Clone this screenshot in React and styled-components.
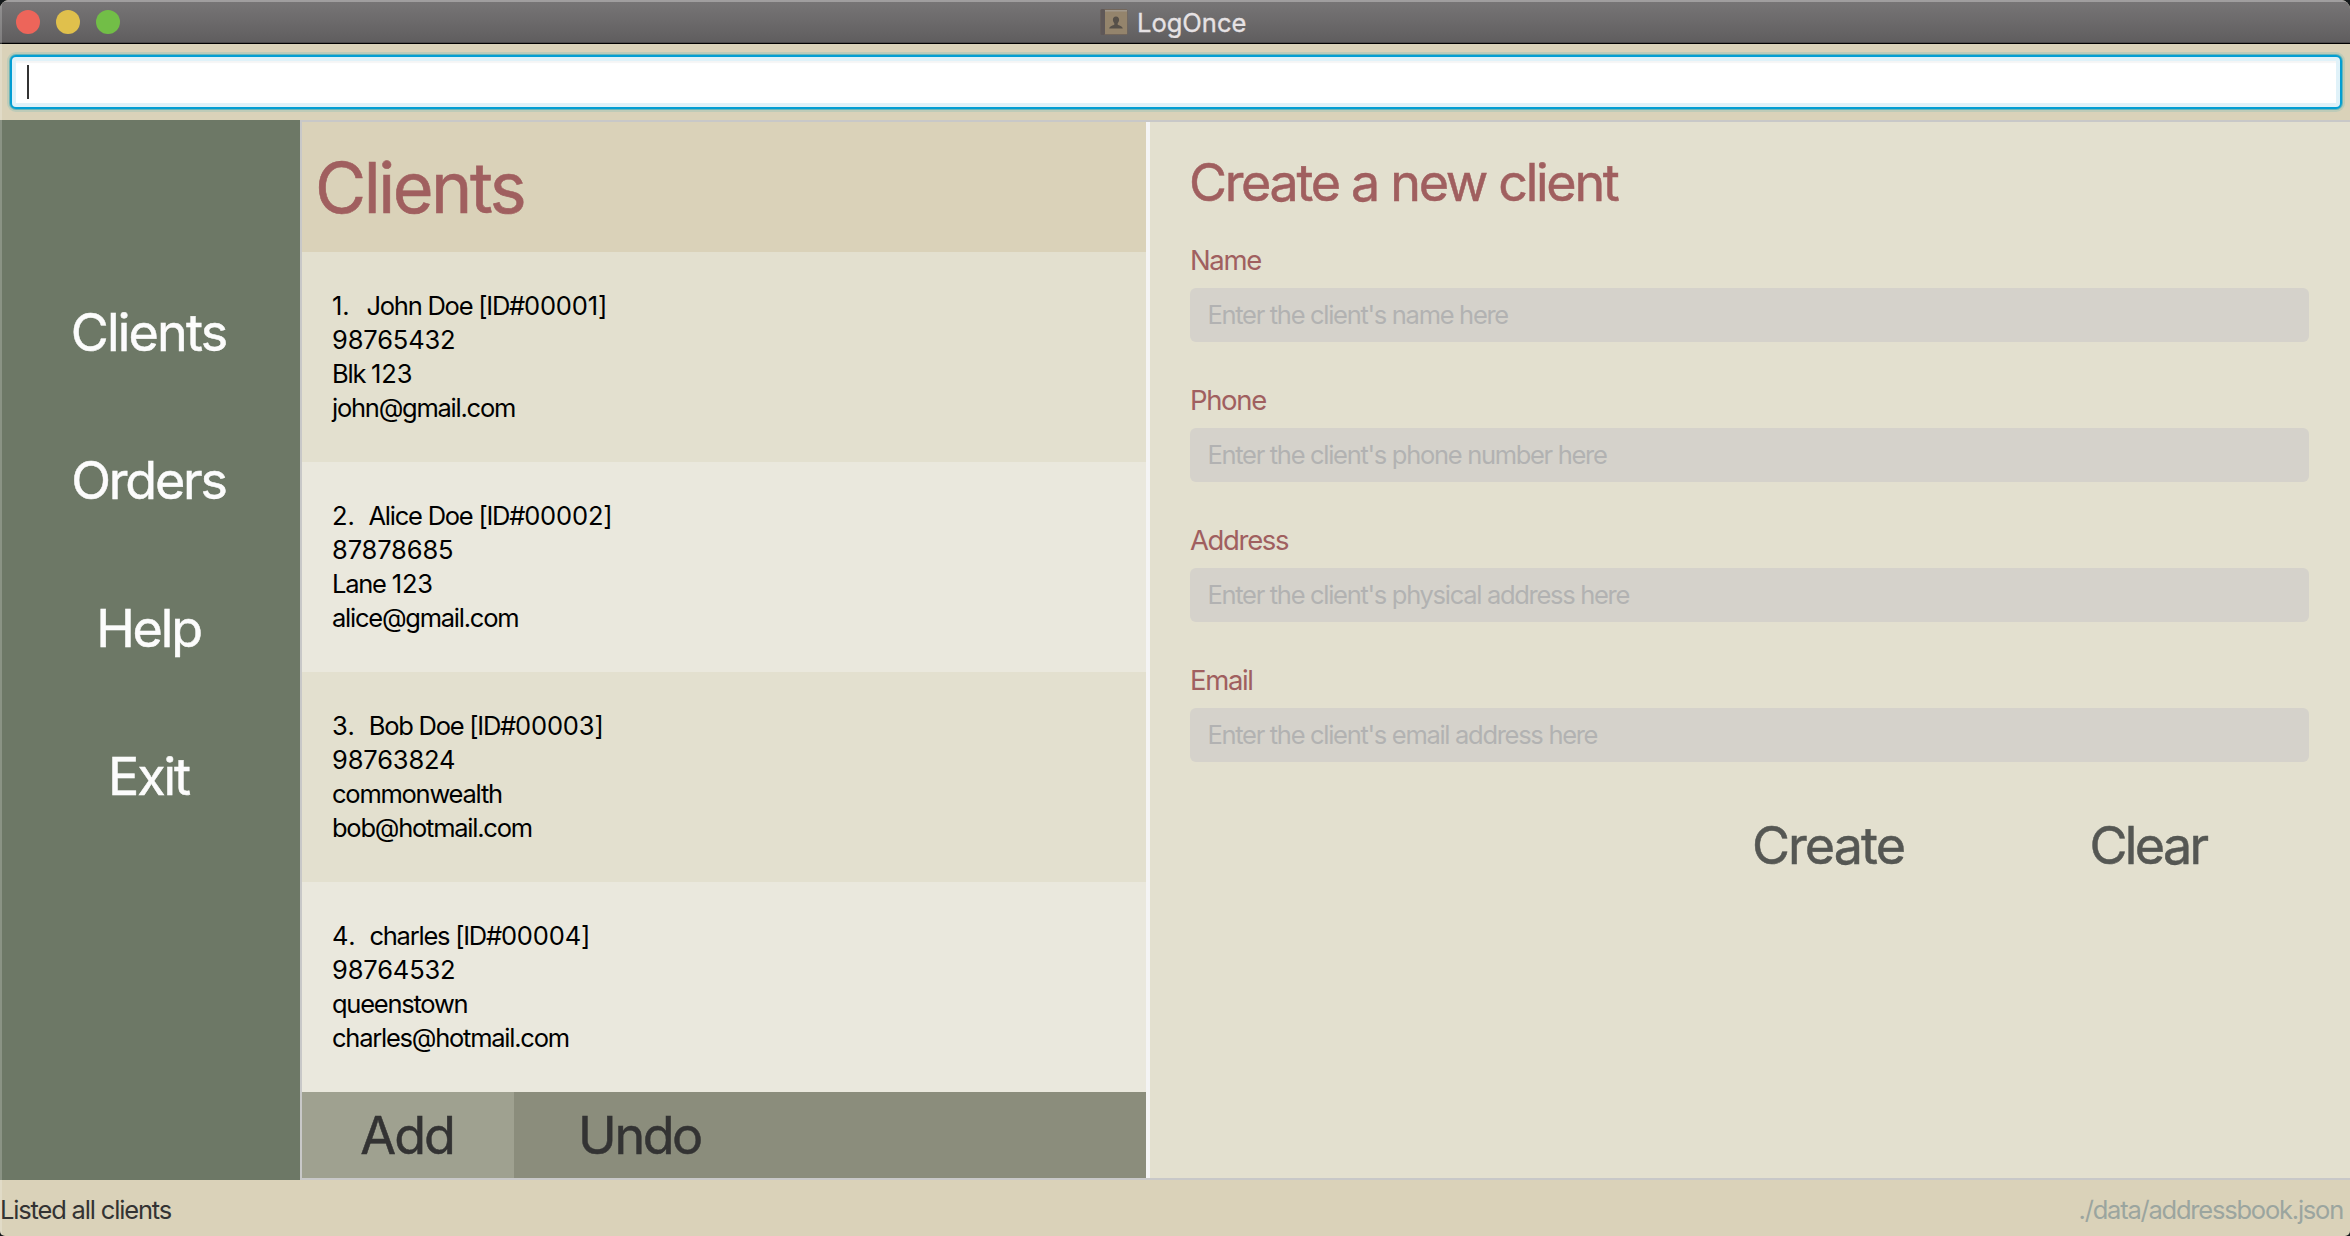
import React from 'react';
import styled, { createGlobalStyle } from 'styled-components';

const colors = {
  sand: '#dad2b9',
  moss: '#6d7866',
  cream: '#e3e0cf',
  creamLight: '#eae8dd',
  rose: '#a05f5f',
  line: '#c8c8c8',
};

const GlobalStyle = createGlobalStyle`
  * { box-sizing: border-box; }
  body { margin: 0; background: #14181a; font-family: Inter, "Liberation Sans", sans-serif; }
  button, input { font-family: inherit; border: 0; padding: 0; margin: 0; background: none; outline: none; }
`;

const Window = styled.div`
  position: relative;
  display: flex;
  flex-direction: column;
  width: 2350px;
  height: 1236px;
  overflow: hidden;
  background: ${colors.sand};
  border-radius: 9px 9px 5px 5px;
`;

const EdgeHighlight = styled.div`
  position: absolute;
  left: 0;
  top: 0;
  bottom: 0;
  width: 2px;
  background: rgba(255, 255, 255, 0.2);
  pointer-events: none;
`;

const TitleBar = styled.header`
  display: flex;
  align-items: flex-start;
  height: 44px;
  flex: none;
  padding: 8px 16px 0;
  background: linear-gradient(#777576, #5f5d5e);
  border-top: 2px solid #a09e9f;
  border-bottom: 1px solid #000;
  box-shadow: inset 0 -1px 0 #4b494a;
`;

const TrafficLights = styled.div`
  display: flex;
  gap: 16px;
  width: 1084px;
`;

const Light = styled.span`
  width: 24px;
  height: 24px;
  border-radius: 50%;
  background: ${(p) => p.$color};
`;

const TitleText = styled.span`
  margin: -3px 0 0 9px;
  font-size: 25.5px;
  line-height: 31px;
  color: #e6e2e4;
  -webkit-text-stroke: 0.3px currentColor;
`;

const BookIcon = styled.svg`
  display: block;
  width: 28px;
  height: 27px;
  margin-top: -1px;
`;

const CommandBar = styled.div`
  flex: none;
  height: 76px;
  padding: 11px 8px 0 10px;
`;

const CommandBox = styled.div`
  display: flex;
  align-items: flex-start;
  height: 54px;
  padding: 8px 13px;
  background: #fff;
  border: 2px solid #039ed3;
  border-radius: 6px;
  box-shadow: 0 0 0 1px #6bb5b8, 0 0 0 3px #becbb8, inset 0 0 0 4px #e0f2f9,
    inset 0 6px 1px #f5f5f5;
`;

const Caret = styled.span`
  width: 2px;
  height: 34px;
  margin-left: 2px;
  background: #333;
`;

const Main = styled.main`
  display: flex;
  flex: none;
  height: 1060px;
`;

const Sidebar = styled.nav`
  display: flex;
  flex-direction: column;
  align-items: center;
  gap: 85px;
  width: 300px;
  padding: 181px 3px 0 0;
  background: ${colors.moss};
`;

const BigButton = styled.button`
  font-size: 52px;
  line-height: 63px;
  letter-spacing: ${(p) => p.$tracking || -2.1}px;
  color: ${(p) => p.$color || '#333'};
  -webkit-text-stroke: 0.5px currentColor;
`;

const Content = styled.div`
  display: flex;
  flex: 1;
  border: 2px solid ${colors.line};
  border-right: 0;
`;

const ListPane = styled.section`
  display: flex;
  flex-direction: column;
  width: 844px;
`;

const ListHeader = styled.h1`
  height: 130px;
  margin: 0;
  padding: 23px 13px 0;
  font-size: 70px;
  font-weight: 400;
  line-height: 85px;
  letter-spacing: -2.45px;
  color: ${colors.rose};
  background: ${colors.sand};
  -webkit-text-stroke: 0.6px currentColor;
`;

const Card = styled.article`
  display: flex;
  flex-direction: column;
  gap: 3px;
  height: 210px;
  padding: 38px 30px 0;
  font-size: 25.5px;
  line-height: 31px;
  color: #000;
  background: ${colors.cream};
  &:nth-of-type(even) { background: ${colors.creamLight}; }
`;

const CardTitle = styled.div`
  display: grid;
  grid-template-columns: minmax(19.5px, max-content) max-content;
  gap: 15px;
`;

const Run = styled.span`
  letter-spacing: ${(p) => (p.$digits ? -0.15 : -1.24)}px;
  white-space: pre;
`;

const ActionBar = styled.div`
  display: flex;
  height: 86px;
  background: #8b8d7c;
`;

const ActionButton = styled(BigButton)`
  width: ${(p) => p.$width}px;
  background: ${(p) => (p.$active ? '#9fa190' : 'transparent')};
  padding: 1px 2px 0 0;
`;

const Divider = styled.div`
  width: 4px;
  background: #f4f4f4;
`;

const FormPane = styled.form`
  flex: 1;
  padding: 29px 41px 0 40px;
  background: ${colors.cream};
`;

const FormTitle = styled.h2`
  margin: 0 0 29px -1px;
  font-size: 52px;
  font-weight: 400;
  line-height: 63px;
  letter-spacing: -2.3px;
  color: ${colors.rose};
  -webkit-text-stroke: 0.5px currentColor;
`;

const Field = styled.label`
  display: flex;
  flex-direction: column;
  gap: 11px;
  height: 140px;
`;

const FieldLabel = styled.span`
  font-size: 27.5px;
  line-height: 34px;
  letter-spacing: -1.35px;
  color: ${colors.rose};
`;

const TextInput = styled.input`
  width: 100%;
  height: 54px;
  padding: 0 17.5px 1px;
  border-radius: 6px;
  background: #d5d2cb;
  font-size: 25.5px;
  letter-spacing: -1.3px;
  &::placeholder { color: #b2b2b2; opacity: 1; }
`;

const FormActions = styled.div`
  display: grid;
  grid-template-columns: 320px 320px;
  justify-content: end;
  padding: 11px 1px 0 0;
`;

const StatusBar = styled.footer`
  display: flex;
  justify-content: space-between;
  flex: 1;
  padding: 14px 7px 0 0;
  font-size: 25.5px;
  line-height: 31px;
  letter-spacing: -1.17px;
  color: #333;
`;

const FilePath = styled.span`
  letter-spacing: -1.22px;
  color: #9ba59f;
`;

const clients = [
  { name: 'John Doe', id: '00001', phone: '98765432', address: 'Blk 123', email: 'john@gmail.com' },
  { name: 'Alice Doe', id: '00002', phone: '87878685', address: 'Lane 123', email: 'alice@gmail.com' },
  { name: 'Bob Doe', id: '00003', phone: '98763824', address: 'commonwealth', email: 'bob@hotmail.com' },
  { name: 'charles', id: '00004', phone: '98764532', address: 'queenstown', email: 'charles@hotmail.com' },
];

const fields = [
  ['Name', "Enter the client's name here"],
  ['Phone', "Enter the client's phone number here"],
  ['Address', "Enter the client's physical address here"],
  ['Email', "Enter the client's email address here"],
];

// Digits are set looser than letters.
function Tracked({ children }) {
  return (
    <span>
      {children.split(/(\d+)/).filter(Boolean).map((part, i) => (
        <Run key={i} $digits={/\d/.test(part)}>{part}</Run>
      ))}
    </span>
  );
}

function AddressBook() {
  return (
    <BookIcon viewBox="0 0 28 27">
      <rect x="0.500" y="0" width="27" height="26" rx="1.5" fill="#74675b" />
      <rect x="0.500" y="0" width="4.500" height="26" rx="1.5" fill="#5f5858" />
      <rect x="5" y="1" width="22" height="24" fill="#94846c" />
      <rect x="5" y="1" width="22" height="1.5" fill="#a1988b" />
      <path d="M16 7.500c-2 0-3.100 1.400-3.100 3.300 0 1.600.7 2.700 1.400 3.400v1.500c-1.100.8-4.900 1.100-5.100 3.900h13.600c-.2-2.800-4-3.100-5.100-3.900v-1.500c.7-.7 1.400-1.800 1.400-3.400C19.100 8.900 18 7.500 16 7.500z" fill="#565049" />
    </BookIcon>
  );
}

export default function App() {
  return (
    <Window>
      <GlobalStyle />
      <TitleBar>
        <TrafficLights>
          <Light $color="#ed655a" />
          <Light $color="#e0c04c" />
          <Light $color="#72be47" />
        </TrafficLights>
        <AddressBook />
        <TitleText>LogOnce</TitleText>
      </TitleBar>
      <CommandBar>
        <CommandBox><Caret /></CommandBox>
      </CommandBar>
      <Main>
        <Sidebar>
          <BigButton $color="#fcfcfc" $tracking={-1.8}>Clients</BigButton>
          <BigButton $color="#fcfcfc" $tracking={-2.18}>Orders</BigButton>
          <BigButton $color="#fcfcfc" $tracking={-2.18}>Help</BigButton>
          <BigButton $color="#fcfcfc">Exit</BigButton>
        </Sidebar>
        <Content>
          <ListPane>
            <ListHeader>Clients</ListHeader>
            {clients.map((c, i) => (
              <Card key={c.id}>
                <CardTitle>
                  <Tracked>{`${i + 1}.`}</Tracked>
                  <Tracked>{`${c.name} [ID#${c.id}]`}</Tracked>
                </CardTitle>
                <Tracked>{c.phone}</Tracked>
                <Tracked>{c.address}</Tracked>
                <Tracked>{c.email}</Tracked>
              </Card>
            ))}
            <ActionBar>
              <ActionButton $width={212} $active>Add</ActionButton>
              <ActionButton $width={253} $tracking={-2.42}>Undo</ActionButton>
            </ActionBar>
          </ListPane>
          <Divider />
          <FormPane>
            <FormTitle>Create a new client</FormTitle>
            {fields.map(([label, hint]) => (
              <Field key={label}>
                <FieldLabel>{label}</FieldLabel>
                <TextInput placeholder={hint} />
              </Field>
            ))}
            <FormActions>
              <BigButton type="button" $color="#555753" $tracking={-1.9}>Create</BigButton>
              <BigButton type="button" $color="#555753" $tracking={-2.6}>Clear</BigButton>
            </FormActions>
          </FormPane>
        </Content>
      </Main>
      <StatusBar>
        <span>Listed all clients</span>
        <FilePath>./data/addressbook.json</FilePath>
      </StatusBar>
      <EdgeHighlight />
    </Window>
  );
}
